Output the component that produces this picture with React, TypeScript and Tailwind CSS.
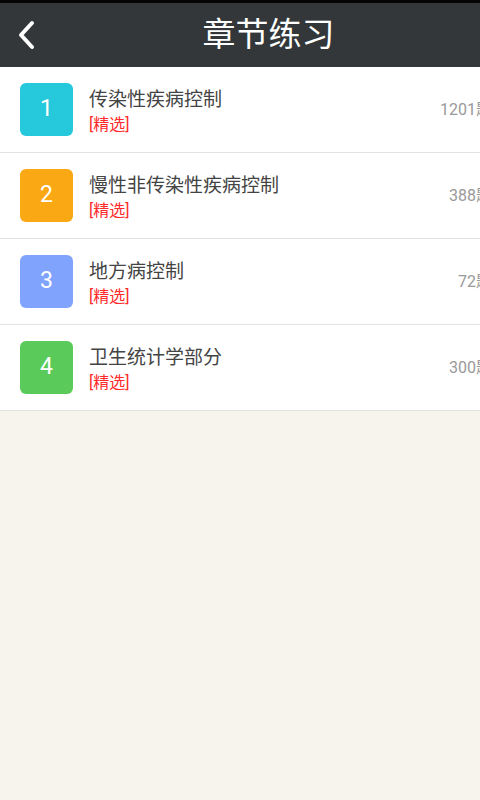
import React from "react";

const items = [
  { n: 1, title: "传染性疾病控制", count: "1201题", color: "bg-[#26c9dc]" },
  { n: 2, title: "慢性非传染性疾病控制", count: "388题", color: "bg-[#fba815]" },
  { n: 3, title: "地方病控制", count: "72题", color: "bg-[#80a3fd]" },
  { n: 4, title: "卫生统计学部分", count: "300题", color: "bg-[#5acb5a]" },
];

export default function App() {
  return (
    <div
      className="w-[480px] h-[800px] bg-[#f7f4ee] flex flex-col overflow-hidden"
      style={{ fontFamily: '"Roboto", "Noto Sans CJK SC", sans-serif' }}
    >
      <div className="h-[3px] bg-[#050505]" />
      <div className="h-[64px] bg-[#33373a] flex items-center">
        <div className="w-[57px] h-full flex items-center justify-center">
          <svg width="20" height="30" viewBox="0 0 20 30" className="ml-[-4px]">
            <path d="M15 3 L4 15 L15 27" stroke="white" strokeWidth="4" fill="none" strokeLinecap="round" strokeLinejoin="round" />
          </svg>
        </div>
        <div className="flex-1 text-center text-white text-[33px] leading-none pb-[2px]">章节练习</div>
      </div>
      <div className="flex flex-col">
        {items.map((it) => (
          <div key={it.n} className="h-[86px] bg-white border-b border-[#e2e2e2] flex items-center overflow-hidden">
            <div className={`ml-[20px] w-[53px] h-[53px] rounded-[6px] ${it.color} flex items-center justify-center text-white text-[23px]`}>
              {it.n}
            </div>
            <div className="ml-[16px] flex-1 flex flex-col pt-[3px]">
              <div className="text-[19px] leading-[22px] text-[#444444]">{it.title}</div>
              <div className="text-[16px] leading-[18px] mt-[5px] text-[#ff2a2a]">[精选]</div>
            </div>
            <div className="mr-[-12px] text-[16px] text-[#999999] whitespace-nowrap">{it.count}</div>
          </div>
        ))}
      </div>
    </div>
  );
}
